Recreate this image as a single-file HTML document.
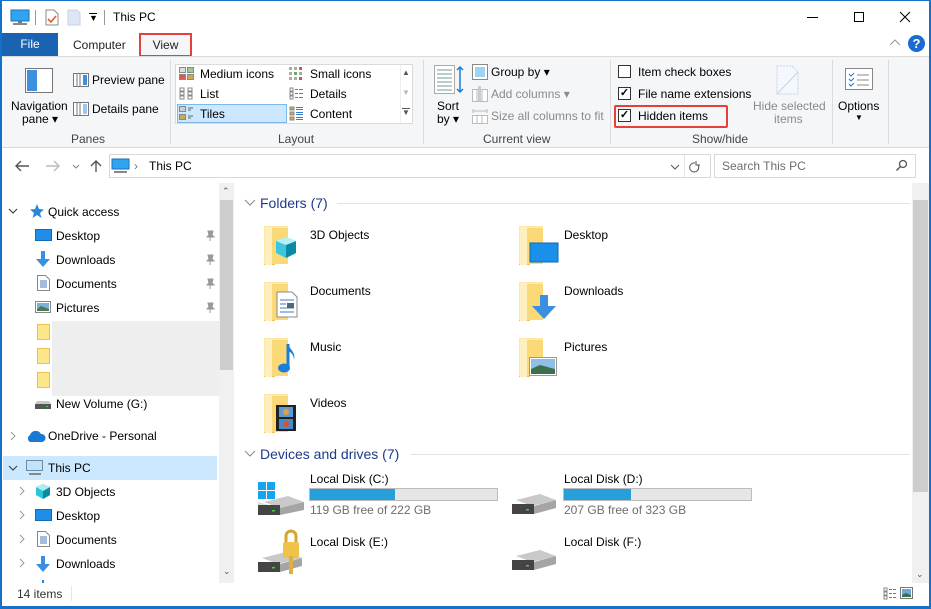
<!DOCTYPE html>
<html><head><meta charset="utf-8"><style>
*{margin:0;padding:0;box-sizing:border-box}
body{width:931px;height:609px;overflow:hidden;background:#fff;font-family:"Liberation Sans",sans-serif;font-size:12px;color:#000;position:relative}
.a{position:absolute;white-space:nowrap}
.t{position:absolute;white-space:nowrap;line-height:14px;transform:translateY(-7px)}
.g{color:#8a8a8a}
.sep{position:absolute;width:1px;background:#dcdcdc}
.cb{position:absolute;width:13px;height:13px;border:1px solid #333;background:#fff;font-size:11px;line-height:11px;text-align:center;font-weight:bold}
.fold{position:absolute;width:40px;height:42px}
</style></head><body>
<!-- window border -->
<div class="a" style="left:0;top:0;width:931px;height:609px;border:1px solid #1570c8;border-left:2px solid #1570c8;border-right:2px solid #1570c8;border-bottom:3px solid #1570c8;z-index:50;pointer-events:none"></div>

<!-- title bar -->
<svg class="a" style="left:10px;top:9px" width="20" height="17"><rect x="1" y="1" width="18" height="11" fill="#2fa4f0" stroke="#1c6fb8"/><rect x="8" y="12" width="4" height="2" fill="#777"/><rect x="3" y="14" width="14" height="2" fill="#888"/></svg>
<div class="a" style="left:35px;top:10px;width:1px;height:15px;background:#999"></div>
<svg class="a" style="left:45px;top:9px" width="14" height="17"><path d="M1 1h8l4 4v11H1z" fill="#fff" stroke="#888"/><path d="M3 10l3 3 5-6" stroke="#e8562c" stroke-width="1.6" fill="none"/></svg>
<svg class="a" style="left:67px;top:9px" width="14" height="17"><path d="M1 1h9l3 3v12H1z" fill="#dde6f3" stroke="#c5d3e8"/></svg>
<div class="a" style="left:89px;top:13px;font-size:9px">&#9660;</div>
<div class="a" style="left:89px;top:13px;width:8px;height:1px;background:#000"></div>
<div class="a" style="left:104px;top:10px;width:1px;height:15px;background:#999"></div>
<div class="t" style="left:113px;top:17px">This PC</div>
<div class="a" style="left:807px;top:17px;width:11px;height:1px;background:#000"></div>
<div class="a" style="left:854px;top:12px;width:10px;height:10px;border:1px solid #000"></div>
<svg class="a" style="left:899px;top:11px" width="12" height="12"><path d="M1 1L11 11M11 1L1 11" stroke="#000"/></svg>

<!-- tabs -->
<div class="a" style="left:2px;top:33px;width:56px;height:23px;background:#1a62b2;color:#fff;text-align:center;line-height:23px">File</div>
<div class="t" style="left:73px;top:45px;color:#222">Computer</div>
<div class="a" style="left:139px;top:33px;width:53px;height:24px;border:2px solid #e5403a;background:#f5f6f7;text-align:center;line-height:20px;color:#222">View</div>
<svg class="a" style="left:889px;top:39px" width="12" height="8"><path d="M1 6l5-5 5 5" stroke="#999" fill="none"/></svg>
<div class="a" style="left:908px;top:35px;width:17px;height:17px;border-radius:50%;background:#1c6bd0;color:#fff;font-weight:bold;font-size:13px;text-align:center;line-height:17px">?</div>

<!-- ribbon -->
<div class="a" style="left:2px;top:56px;width:927px;height:92px;background:#f5f6f7;border-top:1px solid #dadbdc;border-bottom:1px solid #dadbdc"></div>
<svg class="a" style="left:25px;top:68px" width="28" height="25"><rect x="0.5" y="0.5" width="27" height="24" fill="#fff" stroke="#777"/><rect x="2" y="2" width="10" height="21" fill="#3d8fe0"/></svg>
<div class="t" style="left:11px;top:106px">Navigation</div>
<div class="t" style="left:22px;top:119px">pane &#9662;</div>
<svg class="a" style="left:73px;top:73px" width="16" height="14"><rect x="0.5" y="0.5" width="15" height="13" fill="#fff" stroke="#777"/><rect x="10" y="2" width="4" height="10" fill="#3d8fe0"/><path d="M4 1v12M7 1v12" stroke="#777"/></svg>
<div class="t" style="left:92px;top:80px">Preview pane</div>
<svg class="a" style="left:73px;top:102px" width="16" height="14"><rect x="0.5" y="0.5" width="15" height="13" fill="#fff" stroke="#777"/><path d="M4 1v12M7 1v12" stroke="#777"/><path d="M10 3h4M10 5h4M10 7h4M10 9h4M10 11h4" stroke="#3d8fe0"/></svg>
<div class="t" style="left:92px;top:109px">Details pane</div>
<div class="t" style="left:71px;top:139px;color:#444">Panes</div>
<div class="sep" style="left:170px;top:60px;height:84px"></div>

<div class="a" style="left:175px;top:64px;width:238px;height:60px;background:#fff;border:1px solid #dadada"></div>
<div class="a" style="left:177px;top:104px;width:110px;height:19px;background:#cce8ff;border:1px solid #7fb8ea"></div>
<svg class="a" style="left:179px;top:67px" width="15" height="13"><rect x=".5" y=".5" width="6" height="5" fill="#ddd" stroke="#888"/><rect x="8.5" y=".5" width="6" height="5" fill="#9c9" stroke="#888"/><rect x=".5" y="7.5" width="6" height="5" fill="#d55" stroke="#888"/><rect x="8.5" y="7.5" width="6" height="5" fill="#ca5" stroke="#888"/></svg>
<div class="t" style="left:200px;top:74px">Medium icons</div>
<svg class="a" style="left:179px;top:87px" width="15" height="14"><path d="M1 1h4v3H1zM1 5h4v3H1zM1 9h4v3H1zM9 1h4v3H9zM9 5h4v3H9zM9 9h4v3H9z" fill="none" stroke="#888"/></svg>
<div class="t" style="left:200px;top:94px">List</div>
<svg class="a" style="left:179px;top:106px" width="15" height="15"><rect x=".5" y=".5" width="6" height="5" fill="#ccd" stroke="#888"/><rect x=".5" y="8.5" width="6" height="5" fill="#ca5" stroke="#888"/><path d="M9 2h5M9 4h3M9 10h5M9 12h3" stroke="#666"/></svg>
<div class="t" style="left:200px;top:114px">Tiles</div>
<svg class="a" style="left:289px;top:67px" width="15" height="13"><g fill="#aaa"><rect x="0" y="0" width="3" height="3"/><rect x="5" y="0" width="3" height="3"/><rect x="10" y="0" width="3" height="3" fill="#c55"/><rect x="0" y="5" width="3" height="3"/><rect x="5" y="5" width="3" height="3" fill="#6a6"/><rect x="10" y="5" width="3" height="3"/><rect x="0" y="10" width="3" height="3"/><rect x="5" y="10" width="3" height="3"/><rect x="10" y="10" width="3" height="3" fill="#c55"/></g></svg>
<div class="t" style="left:310px;top:74px">Small icons</div>
<svg class="a" style="left:289px;top:87px" width="15" height="14"><path d="M1 1h3v3H1zM1 5h3v3H1zM1 9h3v3H1z" fill="none" stroke="#888"/><path d="M6 2.5h3M10 2.5h4M6 6.5h3M10 6.5h4M6 10.5h3M10 10.5h4" stroke="#777"/></svg>
<div class="t" style="left:310px;top:94px">Details</div>
<svg class="a" style="left:289px;top:106px" width="15" height="15"><path d="M1 1h4v3H1zM1 6h4v3H1zM1 11h4v3H1z" fill="#ca5" stroke="#888"/><path d="M7 1.5h7M7 3.5h7M7 6.5h7M7 8.5h7M7 11.5h7M7 13.5h7" stroke="#3d7bd0"/></svg>
<div class="t" style="left:310px;top:114px">Content</div>
<div class="a" style="left:400px;top:65px;width:12px;height:58px;border-left:1px solid #eee"></div>
<div class="a" style="left:402px;top:68px;font-size:8px;color:#555">&#9650;</div>
<div class="a" style="left:402px;top:88px;font-size:8px;color:#bbb">&#9660;</div>
<div class="a" style="left:402px;top:108px;font-size:8px;color:#555;border-top:1px solid #555;line-height:8px">&#9660;</div>
<div class="t" style="left:278px;top:139px;color:#444">Layout</div>
<div class="sep" style="left:423px;top:60px;height:84px"></div>

<svg class="a" style="left:434px;top:65px" width="30" height="30"><rect x=".5" y=".5" width="20" height="28" fill="#fff" stroke="#aaa"/><path d="M3 5h15M3 9h15M3 13h15M3 17h15M3 21h15M3 25h15" stroke="#bcc" stroke-width="2"/><path d="M26 2v25M23 5l3-3 3 3M23 24l3 3 3-3" stroke="#1e7ad0" stroke-width="1.5" fill="none"/></svg>
<div class="t" style="left:437px;top:106px">Sort</div>
<div class="t" style="left:437px;top:119px">by &#9662;</div>
<svg class="a" style="left:472px;top:64px" width="16" height="16"><rect x=".5" y=".5" width="15" height="15" fill="#fff" stroke="#888"/><rect x="3" y="3" width="10" height="10" fill="#9cd2f5"/></svg>
<div class="t" style="left:491px;top:72px">Group by &#9662;</div>
<svg class="a" style="left:472px;top:86px" width="16" height="16"><rect x=".5" y="3.5" width="15" height="12" fill="#fff" stroke="#bbb"/><path d="M5 4v11M10 4v11" stroke="#bbb"/><rect x="6" y="0" width="3" height="15" fill="#ccc"/></svg>
<div class="t g" style="left:491px;top:94px">Add columns &#9662;</div>
<svg class="a" style="left:472px;top:108px" width="16" height="16"><path d="M1 3h14M1 1v4M15 1v4" stroke="#bbb"/><rect x=".5" y="7.5" width="15" height="8" fill="#fff" stroke="#bbb"/><path d="M5 8v7M10 8v7" stroke="#bbb"/></svg>
<div class="t g" style="left:491px;top:116px">Size all columns to fit</div>
<div class="t" style="left:483px;top:139px;color:#444">Current view</div>
<div class="sep" style="left:610px;top:60px;height:84px"></div>

<div class="cb" style="left:618px;top:65px"></div>
<div class="t" style="left:638px;top:72px">Item check boxes</div>
<div class="cb" style="left:618px;top:87px">&#10003;</div>
<div class="t" style="left:638px;top:94px">File name extensions</div>
<div class="a" style="left:614px;top:105px;width:114px;height:23px;border:2px solid #e5403a;border-radius:2px"></div>
<div class="cb" style="left:618px;top:109px">&#10003;</div>
<div class="t" style="left:638px;top:116px">Hidden items</div>
<svg class="a" style="left:776px;top:65px" width="24" height="30"><path d="M1 1h15l6 6v22H1z" fill="#f4f7fb" stroke="#c5d3e8" stroke-dasharray="2 1"/><path d="M1 29L22 7" stroke="#c5d3e8"/></svg>
<div class="t g" style="left:753px;top:106px">Hide selected</div>
<div class="t g" style="left:774px;top:119px">items</div>
<div class="t" style="left:692px;top:139px;color:#444">Show/hide</div>
<div class="sep" style="left:832px;top:60px;height:84px"></div>
<svg class="a" style="left:845px;top:68px" width="28" height="22"><rect x=".5" y=".5" width="27" height="21" fill="#fff" stroke="#888"/><path d="M4 6l2 2 3-3M4 11l2 2 3-3M4 16l2 2 3-3" stroke="#1e7ad0" fill="none"/><path d="M12 7h12M12 12h12M12 17h12" stroke="#888"/></svg>
<div class="t" style="left:838px;top:106px">Options</div>
<div class="a" style="left:855px;top:113px;font-size:8px">&#9660;</div>
<div class="sep" style="left:888px;top:60px;height:84px"></div>

<!-- address bar -->
<svg class="a" style="left:14px;top:159px" width="100" height="14"><path d="M2 7h13M7 2L2 7l5 5" stroke="#555" stroke-width="1.4" fill="none"/><path d="M32 7h13M40 2l5 5-5 5" stroke="#bbb" stroke-width="1.4" fill="none"/><path d="M59 6l3 3 3-3" stroke="#888" fill="none"/><path d="M82 13V2M77 7l5-5 5 5" stroke="#555" stroke-width="1.4" fill="none"/></svg>
<div class="a" style="left:109px;top:154px;width:602px;height:24px;border:1px solid #d9d9d9"></div>
<svg class="a" style="left:111px;top:158px" width="20" height="16"><rect x="1" y="1" width="17" height="10" fill="#2fa4f0" stroke="#1c6fb8"/><rect x="3" y="13" width="13" height="2" fill="#888"/></svg>
<div class="t g" style="left:134px;top:166px;color:#777">&#8250;</div>
<div class="t" style="left:149px;top:166px">This PC</div>
<div class="a" style="left:684px;top:155px;width:1px;height:22px;background:#e5e5e5"></div>
<svg class="a" style="left:670px;top:160px" width="40" height="14"><path d="M1 5l4 4 4-4" stroke="#555" fill="none"/><path d="M25 3a4.5 4.5 0 1 0 3 2" stroke="#555" fill="none"/><path d="M26 1v4h4" stroke="#555" fill="none"/></svg>
<div class="a" style="left:714px;top:154px;width:202px;height:24px;border:1px solid #d9d9d9"></div>
<div class="t" style="left:722px;top:166px;color:#6d6d6d">Search This PC</div>
<svg class="a" style="left:895px;top:159px" width="14" height="14"><circle cx="8" cy="5" r="3.5" stroke="#555" fill="none" stroke-width="1.3"/><path d="M5.5 7.5L1.5 11.5" stroke="#555" stroke-width="1.5"/></svg>

<!-- nav pane -->
<div class="a" style="left:3px;top:456px;width:214px;height:24px;background:#cce8ff"></div>
<div class="a" style="left:52px;top:321px;width:168px;height:75px;background:#eeeeee"></div>
<div class="a" style="left:219px;top:183px;width:15px;height:400px;background:#f0f0f0"></div>
<div class="a" style="left:220px;top:200px;width:13px;height:170px;background:#cdcdcd"></div>
<div class="a" style="left:222px;top:186px;font-size:9px;color:#555">&#8963;</div>
<div class="a" style="left:223px;top:566px;font-size:9px;color:#555">&#8964;</div>
<svg class="a" style="left:7px;top:205px" width="12" height="12"><path d="M2 4l4 4 4-4" stroke="#444" fill="none" stroke-width="1.2"/></svg>
<svg class="a" style="left:28px;top:203px" width="16" height="16"><path d="M9 1l2 5 5 .5-4 3.5 1.5 5L9 12l-4.5 3 1.5-5L2 6.5l5-.5z" fill="#2b88d8"/></svg>
<div class="t" style="left:48px;top:212px">Quick access</div>
<div class="a" style="left:35px;top:229px;width:17px;height:12px;background:#1f8ee8;border:1px solid #136bb5"></div>
<div class="t" style="left:56px;top:236px">Desktop</div>
<svg class="a" style="left:35px;top:250px" width="16" height="18"><path d="M6 1h4v8h5l-7 8-7-8h5z" fill="#3b8fe0"/></svg>
<div class="t" style="left:56px;top:260px">Downloads</div>
<svg class="a" style="left:37px;top:275px" width="13" height="16"><path d="M.5.5h8l4 4v11H.5z" fill="#fff" stroke="#888"/><path d="M3 6h7M3 8h7M3 10h7M3 12h7" stroke="#4a7ab8"/></svg>
<div class="t" style="left:56px;top:284px">Documents</div>
<svg class="a" style="left:35px;top:301px" width="16" height="12"><rect x=".5" y=".5" width="15" height="11" fill="#fff" stroke="#888"/><rect x="2" y="2" width="12" height="8" fill="#7fb0d8"/><path d="M2 8l4-3 8 3v2H2z" fill="#4a7a5a"/></svg>
<div class="t" style="left:56px;top:308px">Pictures</div>
<div class="a" style="left:37px;top:324px;width:13px;height:16px;background:#fde58a;border:1px solid #e7c24e"></div>
<div class="a" style="left:37px;top:348px;width:13px;height:16px;background:#fde58a;border:1px solid #e7c24e"></div>
<div class="a" style="left:37px;top:372px;width:13px;height:16px;background:#fde58a;border:1px solid #e7c24e"></div>
<svg class="a" style="left:205px;top:230px" width="10" height="150"><g fill="#999"><path d="M3 1h5l-1 4 2 2H2l2-2zM5 7v4" stroke="#999"/><path d="M3 25h5l-1 4 2 2H2l2-2zM5 31v4" stroke="#999"/><path d="M3 49h5l-1 4 2 2H2l2-2zM5 55v4" stroke="#999"/><path d="M3 73h5l-1 4 2 2H2l2-2zM5 79v4" stroke="#999"/></g></svg>
<svg class="a" style="left:35px;top:399px" width="16" height="10"><path d="M2 2h12l2 3v5H0V5z" fill="#c8c8c8"/><rect x="0" y="5" width="16" height="5" fill="#555"/><rect x="11" y="7" width="2" height="1" fill="#4c4"/></svg>
<div class="t" style="left:56px;top:404px">New Volume (G:)</div>
<svg class="a" style="left:8px;top:430px" width="10" height="12"><path d="M3 2l4 4-4 4" stroke="#999" fill="none"/></svg>
<svg class="a" style="left:26px;top:429px" width="20" height="14"><path d="M4 13a4 4 0 0 1 0-7 6 6 0 0 1 11-1 4 4 0 0 1 1 8z" fill="#1b78d4"/></svg>
<div class="t" style="left:48px;top:436px">OneDrive - Personal</div>
<svg class="a" style="left:7px;top:462px" width="12" height="12"><path d="M2 4l4 4 4-4" stroke="#444" fill="none" stroke-width="1.2"/></svg>
<svg class="a" style="left:26px;top:460px" width="18" height="16"><rect x=".5" y=".5" width="16" height="10" fill="#bfe3fb" stroke="#6a8aa8"/><rect x="3" y="13" width="12" height="2" fill="#888"/></svg>
<div class="t" style="left:48px;top:468px">This PC</div>
<svg class="a" style="left:17px;top:486px" width="10" height="90"><g stroke="#999" fill="none"><path d="M3 1l4 4-4 4"/><path d="M3 25l4 4-4 4"/><path d="M3 49l4 4-4 4"/><path d="M3 73l4 4-4 4"/></g></svg>
<svg class="a" style="left:35px;top:483px" width="17" height="17"><path d="M8 1l7 3v8l-7 4-7-4V4z" fill="#2ec4d8"/><path d="M8 8l7-4v8l-7 4z" fill="#0e8aa0"/><path d="M1 4l7-3 7 3-7 4z" fill="#a8ecf4"/></svg>
<div class="t" style="left:56px;top:492px">3D Objects</div>
<div class="a" style="left:35px;top:509px;width:17px;height:12px;background:#1f8ee8;border:1px solid #136bb5"></div>
<div class="t" style="left:56px;top:516px">Desktop</div>
<svg class="a" style="left:37px;top:531px" width="13" height="16"><path d="M.5.5h8l4 4v11H.5z" fill="#fff" stroke="#888"/><path d="M3 6h7M3 8h7M3 10h7M3 12h7" stroke="#4a7ab8"/></svg>
<div class="t" style="left:56px;top:540px">Documents</div>
<svg class="a" style="left:35px;top:555px" width="16" height="18"><path d="M6 1h4v8h5l-7 8-7-8h5z" fill="#3b8fe0"/></svg>
<div class="t" style="left:56px;top:564px">Downloads</div>
<div class="a" style="left:42px;top:580px;width:2px;height:3px;background:#1e88e5"></div>

<!-- content -->
<div class="a" style="left:912px;top:183px;width:17px;height:400px;background:#f0f0f0"></div>
<div class="a" style="left:913px;top:200px;width:15px;height:292px;background:#cdcdcd"></div>
<div class="a" style="left:916px;top:569px;font-size:9px;color:#555">&#8964;</div>
<svg class="a" style="left:244px;top:197px" width="12" height="10"><path d="M1 3l5 5 5-5" stroke="#888" fill="none"/></svg>
<div class="t" style="left:260px;top:203px;font-size:14px;color:#1e3a8a">Folders (7)</div>
<div class="a" style="left:337px;top:203px;width:573px;height:1px;background:#e2e2e2"></div>
<svg class="a" style="left:244px;top:448px" width="12" height="10"><path d="M1 3l5 5 5-5" stroke="#888" fill="none"/></svg>
<div class="t" style="left:260px;top:454px;font-size:14px;color:#1e3a8a">Devices and drives (7)</div>
<div class="a" style="left:411px;top:454px;width:499px;height:1px;background:#e2e2e2"></div>

<!-- folder tiles -->
<svg width="0" height="0" style="position:absolute"><defs><g id="fd"><path d="M0 2h8l3 3v36H0z" fill="#e9c35c"/><path d="M0 2h24v38H0z" fill="#ffe8a3"/><path d="M2 4h22v36H2z" fill="#fbd977"/><path d="M1 3h7v38H1z" fill="#ffefbe"/></g></defs></svg>
<svg class="fold" style="left:264px;top:224px"><use href="#fd"/><path d="M22 13l10 4v12l-10 5-10-5V17z" fill="#3cc7de"/><path d="M22 21l10-4v12l-10 5z" fill="#0b8aa5"/><path d="M12 17l10-4 10 4-10 4z" fill="#b5f0f8"/></svg>
<div class="t" style="left:310px;top:235px">3D Objects</div>
<svg class="fold" style="left:519px;top:224px"><use href="#fd"/><rect x="11" y="19" width="28" height="19" fill="#1a90ea" stroke="#0f67b0"/></svg>
<div class="t" style="left:564px;top:235px">Desktop</div>
<svg class="fold" style="left:264px;top:280px"><use href="#fd"/><path d="M13 12h15l5 5v20H13z" fill="#fff" stroke="#888"/><path d="M16 20h14M16 24h6M16 28h14M16 32h14" stroke="#4a7ab8"/><rect x="23" y="23" width="7" height="5" fill="#567"/></svg>
<div class="t" style="left:310px;top:291px">Documents</div>
<svg class="fold" style="left:519px;top:280px"><use href="#fd"/><path d="M21 15h8v11h8L25 39 13 26h8z" fill="#3b8fe0"/></svg>
<div class="t" style="left:564px;top:291px">Downloads</div>
<svg class="fold" style="left:264px;top:336px"><use href="#fd"/><path d="M24 8v24" stroke="#1a7fd8" stroke-width="3"/><ellipse cx="20" cy="32" rx="6" ry="4.5" fill="#1a7fd8"/><path d="M24 8c2 6 8 8 6 16 0-5-3-8-6-9z" fill="#1a7fd8"/></svg>
<div class="t" style="left:310px;top:347px">Music</div>
<svg class="fold" style="left:519px;top:336px"><use href="#fd"/><rect x="10.5" y="21.5" width="27" height="18" fill="#fff" stroke="#999"/><rect x="12" y="23" width="24" height="15" fill="#8cc0e8"/><path d="M12 33l9-4 15 4v5H12z" fill="#3f6e4c"/></svg>
<div class="t" style="left:564px;top:347px">Pictures</div>
<svg class="fold" style="left:264px;top:392px"><use href="#fd"/><rect x="12" y="13" width="20" height="26" fill="#222"/><rect x="15" y="15" width="14" height="10" fill="#5a9ad8"/><rect x="15" y="27" width="14" height="10" fill="#4a88c8"/><circle cx="22" cy="20" r="3" fill="#e8a030"/><circle cx="22" cy="32" r="3" fill="#d85030"/></svg>
<div class="t" style="left:310px;top:403px">Videos</div>

<!-- drives -->
<svg class="a" style="left:256px;top:482px" width="50" height="36"><rect x="2" y="0" width="8" height="8" fill="#16a4f0"/><rect x="11" y="0" width="8" height="8" fill="#16a4f0"/><rect x="2" y="9" width="8" height="8" fill="#16a4f0"/><rect x="11" y="9" width="8" height="8" fill="#16a4f0"/><path d="M8 20l24-6 16 6-24 6z" fill="#c9c9c9"/><path d="M2 24l22 6 24-8v-2l-24 6-22-6z" fill="#dcdcdc"/><path d="M2 23h22v10H2z" fill="#444"/><path d="M24 26l24-6v8l-24 5z" fill="#a5a5a5"/><rect x="16" y="28" width="3" height="1.5" fill="#4c4"/></svg>
<div class="t" style="left:310px;top:479px">Local Disk (C:)</div>
<div class="a" style="left:309px;top:488px;width:189px;height:13px;background:#e6e6e6;border:1px solid #bcbcbc"></div>
<div class="a" style="left:310px;top:489px;width:85px;height:11px;background:#26a0da"></div>
<div class="t" style="left:310px;top:510px;color:#6d6d6d">119 GB free of 222 GB</div>
<svg class="a" style="left:510px;top:492px" width="50" height="26"><path d="M6 8l24-6 16 6-24 6z" fill="#c9c9c9"/><path d="M2 12h22v10H2z" fill="#444"/><path d="M24 14l22-6v8l-22 6z" fill="#a5a5a5"/><rect x="16" y="17" width="3" height="1.5" fill="#4c4"/></svg>
<div class="t" style="left:564px;top:479px">Local Disk (D:)</div>
<div class="a" style="left:563px;top:488px;width:189px;height:13px;background:#e6e6e6;border:1px solid #bcbcbc"></div>
<div class="a" style="left:564px;top:489px;width:67px;height:11px;background:#26a0da"></div>
<div class="t" style="left:564px;top:510px;color:#6d6d6d">207 GB free of 323 GB</div>
<svg class="a" style="left:256px;top:528px" width="50" height="46"><path d="M6 30l24-6 16 6-24 6z" fill="#c9c9c9"/><path d="M2 34h22v10H2z" fill="#444"/><path d="M24 36l22-6v8l-22 6z" fill="#a5a5a5"/><rect x="16" y="39" width="3" height="1.5" fill="#4c4"/><path d="M30 14V8a5 5 0 0 1 10 0v6" stroke="#d4a630" stroke-width="3" fill="none"/><rect x="27" y="14" width="16" height="16" rx="2" fill="#f0c24a"/><rect x="33" y="28" width="4" height="20" fill="#e0b03c"/></svg>
<div class="t" style="left:310px;top:542px">Local Disk (E:)</div>
<svg class="a" style="left:510px;top:548px" width="50" height="26"><path d="M6 8l24-6 16 6-24 6z" fill="#c9c9c9"/><path d="M2 12h22v10H2z" fill="#444"/><path d="M24 14l22-6v8l-22 6z" fill="#a5a5a5"/><rect x="16" y="17" width="3" height="1.5" fill="#4c4"/></svg>
<div class="t" style="left:564px;top:542px">Local Disk (F:)</div>

<!-- status bar -->
<div class="t" style="left:17px;top:594px;color:#333">14 items</div>
<div class="a" style="left:71px;top:586px;width:1px;height:15px;background:#e5e5e5"></div>
<svg class="a" style="left:883px;top:587px" width="30" height="13"><path d="M1 1h3v3H1zM1 5h3v3H1zM1 9h3v3H1z" fill="none" stroke="#888"/><path d="M6 2.5h3M10 2.5h3M6 6.5h3M10 6.5h3M6 10.5h3M10 10.5h3" stroke="#777"/><rect x="17.5" y=".5" width="12" height="11" fill="#fff" stroke="#777"/><rect x="19" y="2" width="9" height="8" fill="#6fa8d8"/><path d="M19 8l4-2 5 2v2h-9z" fill="#3f6e4c"/></svg>
</body></html>
